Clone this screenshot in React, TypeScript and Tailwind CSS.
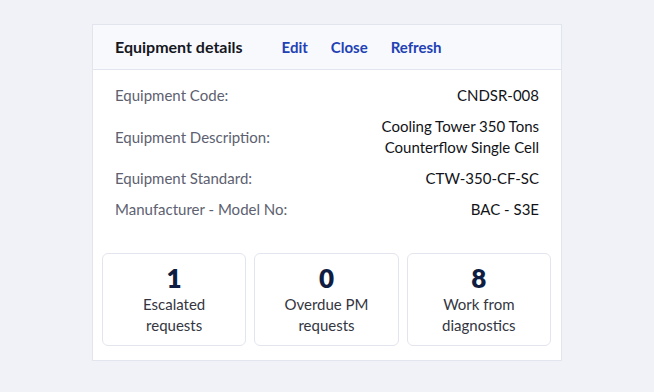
import React from 'react';

const rows: { label: string; value: string[] }[] = [
    { label: 'Equipment Code:', value: ['CNDSR-008'] },
    { label: 'Equipment Description:', value: ['Cooling Tower 350 Tons', 'Counterflow Single Cell'] },
    { label: 'Equipment Standard:', value: ['CTW-350-CF-SC'] },
    { label: 'Manufacturer - Model No:', value: ['BAC - S3E'] },
];

const stats = [
    { count: '1', label: ['Escalated', 'requests'] },
    { count: '0', label: ['Overdue PM', 'requests'] },
    { count: '8', label: ['Work from', 'diagnostics'] },
];

export default function App() {
    return (
        <div
            className="w-[654px] h-[392px] bg-[#f1f2f7] pt-[24px] pl-[92px]"
            style={{ fontFamily: 'Lato, "Noto Sans", sans-serif' }}
        >
            <div className="w-[470px] bg-white border border-[#e3e5ee]">
                <div className="h-[45px] bg-[#f8f9fc] border-b border-[#e3e5ee] flex items-center px-[22px]">
                    <span className="text-[16px] font-bold text-[#15171f]">Equipment details</span>
                    <div className="flex items-center gap-[23px] ml-[39px] text-[15px] font-bold text-[#2141b5]">
                        <button>Edit</button>
                        <button>Close</button>
                        <button>Refresh</button>
                    </div>
                </div>

                <div className="px-[22px] pt-[15px] flex flex-col gap-[10px]">
                    {rows.map((r) => (
                        <div key={r.label} className="flex items-center justify-between text-[15px] leading-[21px]">
                            <span className="text-[#5d6170]">{r.label}</span>
                            <div className="text-right text-[#111318]">
                                {r.value.map((v) => (
                                    <div key={v}>{v}</div>
                                ))}
                            </div>
                        </div>
                    ))}
                </div>

                <div className="grid grid-cols-3 gap-[8px] pl-[9px] pr-[10px] pt-[33px] pb-[14px]">
                    {stats.map((s) => (
                        <div
                            key={s.count}
                            className="h-[93px] border border-[#e3e5ee] rounded-[6px] flex flex-col items-center pt-[9px]"
                        >
                            <div className="text-[26px] leading-[30px] font-extrabold text-[#0f1d42]">{s.count}</div>
                            <div className="text-[15px] leading-[21px] text-[#34363f] text-center mt-[1px]">
                                {s.label.map((l) => (
                                    <div key={l}>{l}</div>
                                ))}
                            </div>
                        </div>
                    ))}
                </div>
            </div>
        </div>
    );
}
